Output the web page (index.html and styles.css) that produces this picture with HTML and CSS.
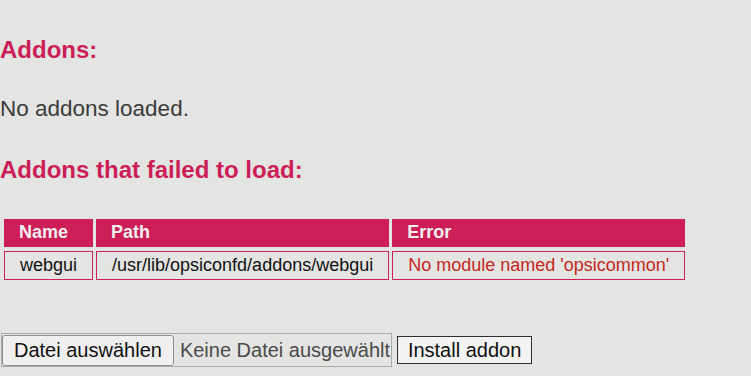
FILE: index.html
```html
<!DOCTYPE html>
<html lang="en">
<head>
<meta charset="utf-8">
<title>Addons</title>
<link rel="stylesheet" href="styles.css">
</head>
<body>
<h2 class="title">Addons:</h2>
<p class="note">No addons loaded.</p>
<h2 class="title title-failed">Addons that failed to load:</h2>
<table class="addons">
  <thead>
    <tr><th>Name</th><th>Path</th><th>Error</th></tr>
  </thead>
  <tbody>
    <tr><td class="center">webgui</td><td>/usr/lib/opsiconfd/addons/webgui</td><td class="error">No module named 'opsicommon'</td></tr>
  </tbody>
</table>
<form class="upload">
  <div class="file">
    <span class="file-btn">Datei auswählen</span>
    <span class="file-name">Keine Datei ausgewählt</span>
  </div>
  <button type="button" class="install">Install addon</button>
</form>
</body>
</html>
```
FILE: styles.css
```css
html, body {
  margin: 0;
  padding: 0;
  background: #e4e4e2;
}
body {
  font-family: "Liberation Sans", Arial, sans-serif;
  color: #3a3a3a;
  width: 751px;
  height: 376px;
  overflow: hidden;
}
.title {
  margin: 36px 0 0;
  font-size: 24px;
  font-weight: bold;
  color: #cc1e57;
  line-height: 28px;
}
.note {
  margin: 32px 0 0;
  font-size: 22.5px;
  line-height: 26px;
  color: #3c3c3c;
}
.title-failed {
  margin-top: 34px;
}
.addons {
  margin-top: 31px;
  margin-left: 1px;
  border-spacing: 3px 4px;
  font-size: 18px;
}
.addons th {
  background: #cc1e57;
  color: #f0eeee;
  font-weight: bold;
  text-align: left;
  padding: 3px 15px 4px;
  line-height: 21px;
}
.addons td {
  border: 1px solid #cc1e57;
  padding: 3px 15px;
  line-height: 21px;
  color: #111;
}
.addons td.center {
  text-align: center;
}
.addons td.error {
  color: #c4281c;
}
.upload {
  margin: 49px 0 0 1px;
  display: flex;
  align-items: center;
  gap: 5px;
}
.file {
  display: flex;
  align-items: center;
  border: 1px solid #ababab;
  height: 32px;
  font-size: 20px;
}
.file-btn {
  display: flex;
  align-items: center;
  height: 29px;
  padding: 0 11px;
  border: 1px solid #8f8f8f;
  border-radius: 3px;
  background: #efefef;
  color: #111;
}
.file-name {
  margin-left: 6px;
  color: #4a4a4a;
  white-space: nowrap;
  width: 211px;
  overflow: hidden;
}
.install {
  font-family: "Liberation Sans", Arial, sans-serif;
  font-size: 20px;
  height: 28px;
  padding: 0 10px;
  border: 1px solid #2e2e2e;
  border-radius: 0;
  background: #f3f3f3;
  color: #111;
  line-height: 24px;
}
```
